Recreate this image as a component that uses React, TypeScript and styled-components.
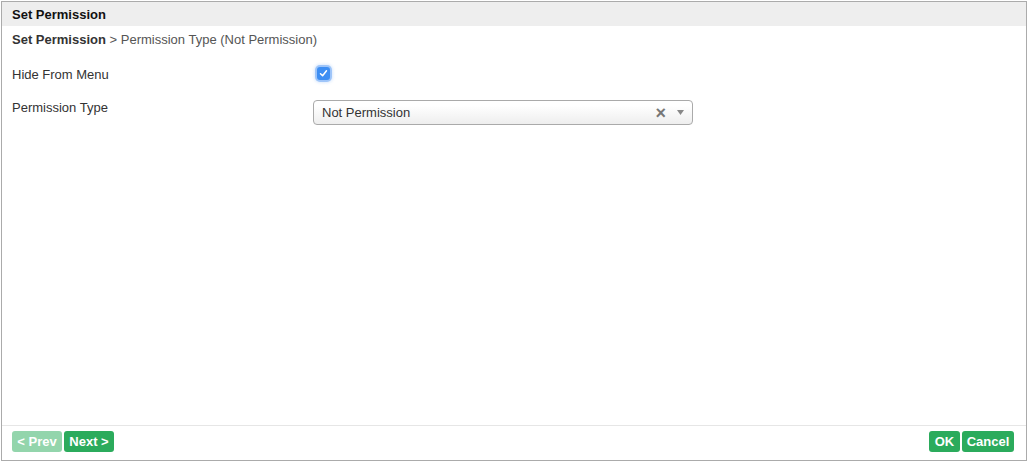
import React from "react";
import styled, { createGlobalStyle } from "styled-components";

const Global = createGlobalStyle`
  html, body { margin: 0; padding: 0; background: #fff; }
  body { font-family: "Liberation Sans", Arial, Helvetica, sans-serif; font-size: 13px; color: #333; }
`;

const Dialog = styled.div`
  box-sizing: border-box;
  margin: 1px 0 0 1px;
  width: 1026px;
  height: 460px;
  border: 1px solid #ababab;
  display: flex;
  flex-direction: column;
  background: #fff;
`;

const Header = styled.div`
  height: 24px;
  line-height: 25px;
  background: #eeeeee;
  padding: 0 10px;
  font-weight: bold;
  color: #111;
`;

const Body = styled.div`
  flex: 1;
  padding: 5px 10px 0;
`;

const Crumb = styled.div`
  line-height: 18px;
  color: #555;
  margin-bottom: 17px;
  b { color: #333; }
`;

const Row = styled.div`
  display: grid;
  grid-template-columns: 301px 1fr;
  align-items: start;
  min-height: 24px;
  margin-bottom: 9px;
`;

const Label = styled.div`
  line-height: 18px;
  color: #333;
`;

const Check = styled.div`
  margin: 1px 0 0 4px;
  width: 13px;
  height: 13px;
  border-radius: 3px;
  background: #3d8ef3;
  box-shadow: 0 0 0 2px rgba(80, 150, 245, 0.45), 0 0 3px 3px rgba(80, 150, 245, 0.2);
  display: flex;
  align-items: center;
  justify-content: center;
`;

const Select = styled.div`
  box-sizing: border-box;
  margin-top: 1px;
  width: 380px;
  height: 25px;
  border: 1px solid #aaa;
  border-radius: 4px;
  background: linear-gradient(#ffffff 20%, #eeeeee 100%);
  display: flex;
  align-items: center;
  padding: 0 8px;
  color: #333;
`;

const SelectText = styled.span`
  flex: 1;
`;

const Clear = styled.span`
  color: #777;
  font-size: 18px;
  font-weight: bold;
  margin-right: 11px;
  line-height: 1;
`;

const Footer = styled.div`
  border-top: 1px solid #e6e6e6;
  padding: 5px 12px 8px 10px;
  display: flex;
  align-items: center;
`;

const Group = styled.div`
  display: flex;
  gap: 2px;
`;

const Spacer = styled.div`
  flex: 1;
`;

const Btn = styled.button<{ $disabled?: boolean; $w: number }>`
  box-sizing: border-box;
  width: ${(p) => p.$w}px;
  height: 21px;
  padding: 0;
  border: none;
  border-radius: 3px;
  background: ${(p) => (p.$disabled ? "#93d5ac" : "#2bab5c")};
  color: #fff;
  font-family: "Liberation Sans", Arial, sans-serif;
  font-size: 13px;
  font-weight: bold;
  line-height: 21px;
  cursor: ${(p) => (p.$disabled ? "default" : "pointer")};
`;

export default function App() {
  return (
    <>
      <Global />
      <Dialog>
        <Header>Set Permission</Header>
        <Body>
          <Crumb>
            <b>Set Permission</b> &gt; Permission Type (Not Permission)
          </Crumb>
          <Row>
            <Label>Hide From Menu</Label>
            <Check>
              <svg width="9" height="9" viewBox="0 0 9 9">
                <path d="M1.5 4.8 L3.6 6.8 L7.5 1.8" fill="none" stroke="#fff" strokeWidth="1.5" strokeLinecap="round" strokeLinejoin="round" />
              </svg>
            </Check>
          </Row>
          <Row>
            <Label>Permission Type</Label>
            <Select>
              <SelectText>Not Permission</SelectText>
              <Clear>×</Clear>
              <svg width="7" height="5" viewBox="0 0 7 5">
                <path d="M0 0 L7 0 L3.5 5 Z" fill="#888" />
              </svg>
            </Select>
          </Row>
        </Body>
        <Footer>
          <Group>
            <Btn $disabled $w={50}>&lt; Prev</Btn>
            <Btn $w={50}>Next &gt;</Btn>
          </Group>
          <Spacer />
          <Group>
            <Btn $w={31}>OK</Btn>
            <Btn $w={52}>Cancel</Btn>
          </Group>
        </Footer>
      </Dialog>
    </>
  );
}
